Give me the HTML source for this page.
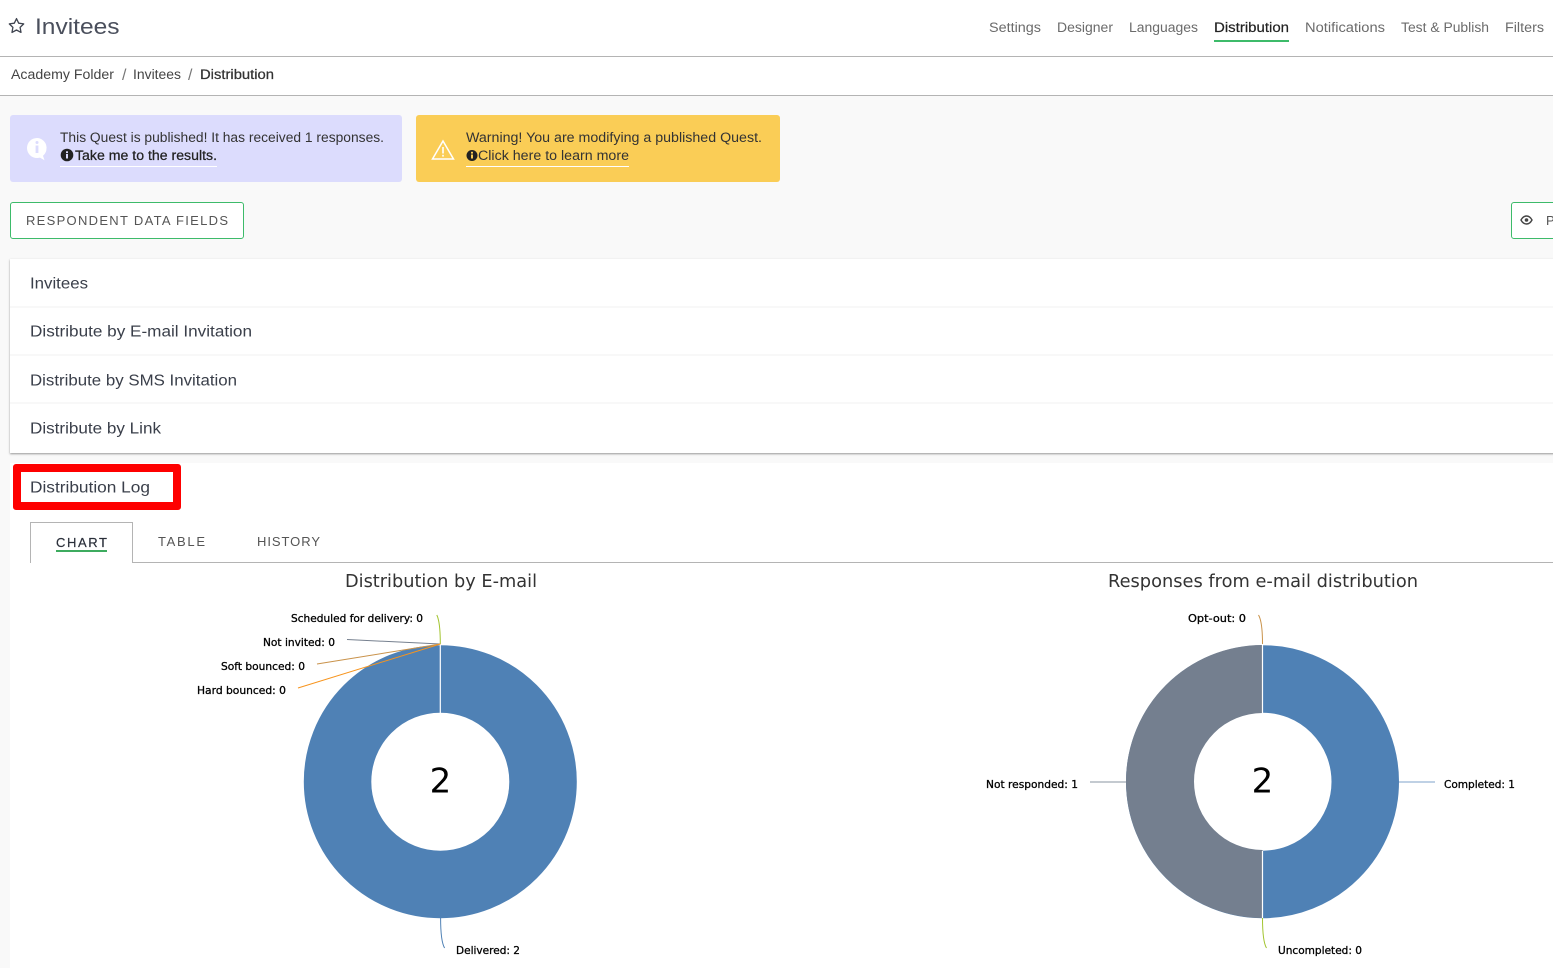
<!DOCTYPE html>
<html lang="en">
<head>
<meta charset="utf-8">
<title>Invitees - Distribution</title>
<style>
html,body{margin:0;padding:0;width:1553px;height:968px;overflow:hidden;background:#f9f9f9}
#p{position:relative;width:1553px;height:968px;overflow:hidden}
.b{position:absolute;box-sizing:border-box}
svg{position:absolute;left:0;top:0}
text{font-family:"Liberation Sans",sans-serif}
.n{font-size:13.5px;fill:#6b6b6b}
.d{font-size:13.5px;fill:#444}
.a{font-size:13.5px;fill:#333}
.r{font-size:15.5px;fill:#3a3f4a}
.c{font-family:"DejaVu Sans",sans-serif;font-size:11px;fill:#000;stroke:#000;stroke-width:.3px}
.t{font-family:"DejaVu Sans",sans-serif;font-size:18px;fill:#333}
.u{font-size:13px;fill:#555}
</style>
</head>
<body>
<div id="p">
<div class="b" style="left:0;top:0;width:1553px;height:96px;background:#fff"></div>
<div class="b" style="left:0;top:56px;width:1553px;height:1px;background:#b4b4b4"></div>
<div class="b" style="left:0;top:95px;width:1553px;height:1px;background:#b4b4b4"></div>
<div class="b" style="left:1214px;top:40px;width:75px;height:2px;background:#3dbb6a"></div>

<div class="b" style="left:10px;top:115px;width:392px;height:67px;background:#dcdcfd;border-radius:3px"></div>
<div class="b" style="left:416px;top:115px;width:364px;height:67px;background:#facd56;border-radius:3px"></div>
<div class="b" style="left:60px;top:166px;width:157px;height:1px;background:#fff"></div>
<div class="b" style="left:466px;top:166px;width:163px;height:1px;background:#fff"></div>

<div class="b" style="left:10px;top:202px;width:234px;height:37px;background:#fff;border:1px solid #3dbb6a;border-radius:3px"></div>
<div class="b" style="left:1511px;top:202px;width:60px;height:37px;background:#fff;border:1px solid #3dbb6a;border-radius:3px"></div>

<div class="b" style="left:10px;top:259px;width:1560px;height:194px;background:#fff;box-shadow:0 1px 2px rgba(0,0,0,.4)"></div>
<div class="b" style="left:10px;top:306px;width:1543px;height:2px;background:#f8f8f8"></div>
<div class="b" style="left:10px;top:354px;width:1543px;height:2px;background:#f8f8f8"></div>
<div class="b" style="left:10px;top:402px;width:1543px;height:2px;background:#f8f8f8"></div>

<div class="b" style="left:10px;top:463px;width:1543px;height:505px;background:#fff"></div>
<div class="b" style="left:13px;top:464px;width:168px;height:46px;border:8px solid #fe0000;border-radius:3px;background:#fff"></div>

<div class="b" style="left:30px;top:562px;width:1523px;height:1px;background:#b4b4b4"></div>
<div class="b" style="left:30px;top:522px;width:103px;height:41px;background:#fff;border:1px solid #b4b4b4;border-bottom:0"></div>
<div class="b" style="left:56px;top:550px;width:51px;height:2px;background:#3dab5f"></div>

<svg width="1553" height="968" viewBox="0 0 1553 968" xmlns="http://www.w3.org/2000/svg">
  <!-- star -->
  <path d="M16.5 18.600l2.200 4.600 5 .7-3.600 3.500.9 5-4.500-2.400-4.500 2.400.9-5-3.600-3.500 5-.7z" fill="none" stroke="#3f4450" stroke-width="1.300" stroke-linejoin="round"/>
  <text x="35" y="34" font-size="22.5" fill="#4a4f5c" textLength="84.500" lengthAdjust="spacingAndGlyphs">Invitees</text>

  <text class="n" x="989" y="32" textLength="52" lengthAdjust="spacingAndGlyphs">Settings</text>
  <text class="n" x="1057" y="32" textLength="56" lengthAdjust="spacingAndGlyphs">Designer</text>
  <text class="n" x="1129" y="32" textLength="69" lengthAdjust="spacingAndGlyphs">Languages</text>
  <text class="n" x="1214" y="32" textLength="75" lengthAdjust="spacingAndGlyphs" style="fill:#222;stroke:#222;stroke-width:.2px">Distribution</text>
  <text class="n" x="1305" y="32" textLength="80" lengthAdjust="spacingAndGlyphs">Notifications</text>
  <text class="n" x="1401" y="32" textLength="88" lengthAdjust="spacingAndGlyphs">Test &amp; Publish</text>
  <text class="n" x="1505" y="32" textLength="39" lengthAdjust="spacingAndGlyphs">Filters</text>

  <text class="d" x="11" y="79" textLength="103" lengthAdjust="spacingAndGlyphs">Academy Folder</text>
  <text x="122" y="80" font-size="16" fill="#777">/</text>
  <text class="d" x="133" y="79" textLength="48" lengthAdjust="spacingAndGlyphs">Invitees</text>
  <text x="188" y="80" font-size="16" fill="#777">/</text>
  <text class="d" x="200" y="79" textLength="74" lengthAdjust="spacingAndGlyphs" style="fill:#333;stroke:#333;stroke-width:.25px">Distribution</text>

  <!-- info bubble -->
  <path d="M37 138a10 10 0 1 0 0 20c1 0 2-.1 3-.4l4.500 2.600-1.500-4.500a10 10 0 0 0-6-17.700z" fill="#fff"/>
  <circle cx="37" cy="142.500" r="1.500" fill="#dcdcfd"/>
  <rect x="35.600" y="145.500" width="2.800" height="7.500" fill="#dcdcfd"/>

  <text class="a" x="60" y="142" textLength="324" lengthAdjust="spacingAndGlyphs">This Quest is published! It has received 1 responses.</text>
  <circle cx="67" cy="155" r="6.300" fill="#222"/>
  <rect x="66" y="154" width="2" height="4.500" fill="#dcdcfd"/><rect x="66" y="151.300" width="2" height="1.800" fill="#dcdcfd"/>
  <text class="a" x="75" y="160" textLength="142" lengthAdjust="spacingAndGlyphs" style="fill:#222;stroke:#222;stroke-width:.25px">Take me to the results.</text>

  <!-- warning triangle -->
  <path d="M443 141l10.500 18h-21z" fill="none" stroke="#fff" stroke-width="1.500" stroke-linejoin="miter"/>
  <rect x="442.200" y="147" width="1.600" height="6.500" fill="#fff"/><rect x="442.200" y="154.800" width="1.600" height="1.800" fill="#fff"/>

  <text class="a" x="466" y="142" textLength="296" lengthAdjust="spacingAndGlyphs">Warning! You are modifying a published Quest.</text>
  <circle cx="472" cy="155.500" r="5.500" fill="#222"/>
  <rect x="471" y="154.500" width="2" height="4" fill="#facd56"/><rect x="471" y="151.800" width="2" height="1.800" fill="#facd56"/>
  <text class="a" x="478" y="160" textLength="151" lengthAdjust="spacingAndGlyphs">Click here to learn more</text>

  <text class="u" x="26" y="225" textLength="202" lengthAdjust="spacing">RESPONDENT DATA FIELDS</text>
  <!-- eye -->
  <path d="M1521 220c1.500-2.800 3.500-4 5.500-4s4 1.200 5.500 4c-1.500 2.800-3.500 4-5.500 4s-4-1.200-5.500-4z" fill="none" stroke="#444" stroke-width="1.400"/>
  <circle cx="1526.500" cy="220" r="1.800" fill="#444"/>
  <text class="u" x="1546" y="225">P</text>

  <text class="r" x="30" y="288.500" textLength="58" lengthAdjust="spacingAndGlyphs">Invitees</text>
  <text class="r" x="30" y="336.500" textLength="222" lengthAdjust="spacingAndGlyphs">Distribute by E-mail Invitation</text>
  <text class="r" x="30" y="385.500" textLength="207" lengthAdjust="spacingAndGlyphs">Distribute by SMS Invitation</text>
  <text class="r" x="30" y="433.500" textLength="131" lengthAdjust="spacingAndGlyphs">Distribute by Link</text>
  <text class="r" x="30" y="492.500" textLength="120" lengthAdjust="spacingAndGlyphs">Distribution Log</text>

  <text x="56" y="547" font-size="13" fill="#2a2f3a" textLength="51" lengthAdjust="spacing" style="stroke:#2a2f3a;stroke-width:.2px">CHART</text>
  <text x="158" y="546" font-size="13" fill="#555" textLength="47" lengthAdjust="spacing">TABLE</text>
  <text x="257" y="546" font-size="13" fill="#555" textLength="63" lengthAdjust="spacing">HISTORY</text>

  <text class="t" x="345" y="587" textLength="192" lengthAdjust="spacingAndGlyphs">Distribution by E-mail</text>
  <text class="t" x="1108" y="587" textLength="310" lengthAdjust="spacingAndGlyphs">Responses from e-mail distribution</text>

  <!-- left donut -->
  <circle cx="440.300" cy="781.700" r="102.750" fill="none" stroke="#4f81b5" stroke-width="67.500"/>
  <line x1="440.300" y1="645" x2="440.300" y2="713" stroke="#fff" stroke-width="1.200"/>
  <path d="M440.300 644c0-13-1-24-3.500-29" fill="none" stroke="#a2c42f" stroke-width="1"/>
  <path d="M347 639.500L440.300 644" fill="none" stroke="#76808f" stroke-width="1"/>
  <path d="M317 664L440.300 644" fill="none" stroke="#c9924a" stroke-width="1"/>
  <path d="M298 688L440.300 644" fill="none" stroke="#f7941d" stroke-width="1"/>
  <path d="M440.600 918c0 14 1 25 4 30" fill="none" stroke="#4f81b5" stroke-width="1"/>
  <text x="440.500" y="792.500" text-anchor="middle" font-size="34" fill="#000" style="font-family:'DejaVu Sans',sans-serif">2</text>

  <!-- right donut -->
  <circle cx="1262.500" cy="781.700" r="102.750" fill="none" stroke="#4f81b5" stroke-width="67.500"/>
  <path d="M1262.500 645a136.500 136.500 0 0 0 0 273v-68a68.500 68.500 0 0 1 0-137z" fill="#747f8f"/>
  <line x1="1262.500" y1="645" x2="1262.500" y2="713" stroke="#fff" stroke-width="1.200"/>
  <line x1="1262.500" y1="851" x2="1262.500" y2="918" stroke="#fff" stroke-width="1.200"/>
  <path d="M1262.500 644c0-13-1-24-4-29" fill="none" stroke="#c9924a" stroke-width="1"/>
  <path d="M1262.500 918c0 14 1 25 4 30" fill="none" stroke="#a2c42f" stroke-width="1"/>
  <line x1="1399" y1="782" x2="1435" y2="782" stroke="#7fa3cb" stroke-width="1"/>
  <line x1="1126" y1="782" x2="1090" y2="782" stroke="#8a94a1" stroke-width="1"/>
  <text x="1262.500" y="792.500" text-anchor="middle" font-size="34" fill="#000" style="font-family:'DejaVu Sans',sans-serif">2</text>

  <text class="c" x="291" y="622" textLength="132" lengthAdjust="spacingAndGlyphs">Scheduled for delivery: 0</text>
  <text class="c" x="263" y="646" textLength="72" lengthAdjust="spacingAndGlyphs">Not invited: 0</text>
  <text class="c" x="221" y="670" textLength="84" lengthAdjust="spacingAndGlyphs">Soft bounced: 0</text>
  <text class="c" x="197" y="694" textLength="89" lengthAdjust="spacingAndGlyphs">Hard bounced: 0</text>
  <text class="c" x="456" y="954" textLength="64" lengthAdjust="spacingAndGlyphs">Delivered: 2</text>
  <text class="c" x="1188" y="622" textLength="58" lengthAdjust="spacingAndGlyphs">Opt-out: 0</text>
  <text class="c" x="986" y="788" textLength="92" lengthAdjust="spacingAndGlyphs">Not responded: 1</text>
  <text class="c" x="1444" y="788" textLength="71" lengthAdjust="spacingAndGlyphs">Completed: 1</text>
  <text class="c" x="1278" y="954" textLength="84" lengthAdjust="spacingAndGlyphs">Uncompleted: 0</text>
</svg>
</div>
</body>
</html>
